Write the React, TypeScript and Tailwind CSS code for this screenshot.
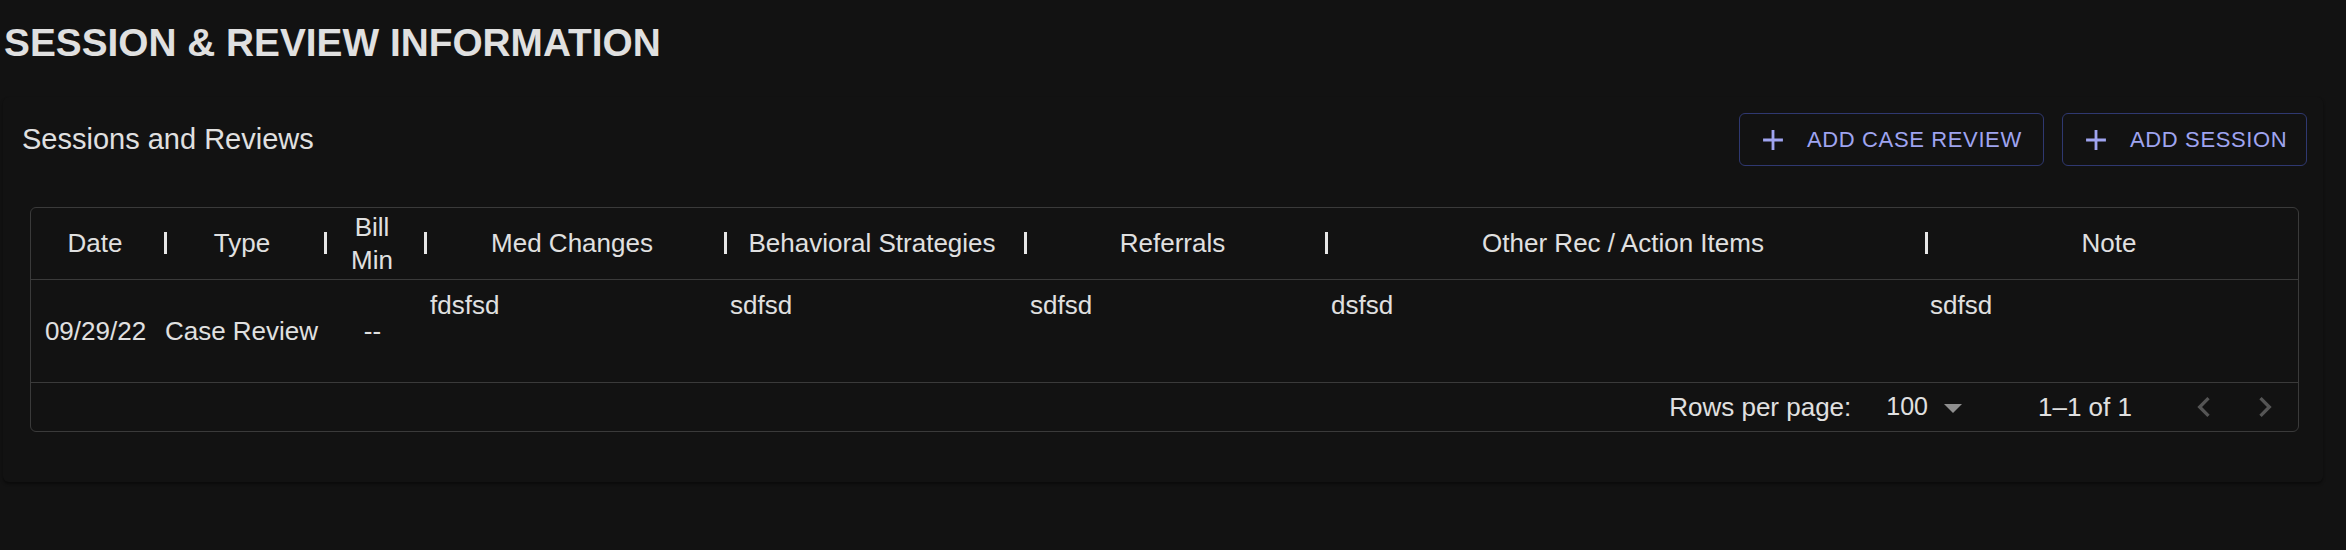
import React from "react";

const gridCols = "grid grid-cols-[134px_160px_100px_300px_300px_301px_600px_1fr]";

const headers = [
  "Date",
  "Type",
  "Bill Min",
  "Med Changes",
  "Behavioral Strategies",
  "Referrals",
  "Other Rec / Action Items",
  "Note",
];

function PlusIcon() {
  return (
    <svg width="34" height="34" viewBox="0 0 24 24" fill="currentColor" className="shrink-0">
      <path d="M19 13h-6v6h-2v-6H5v-2h6V5h2v6h6z" />
    </svg>
  );
}

function OutlineButton({ label, w }: { label: string; w: string }) {
  return (
    <button
      className={`flex items-center h-[53px] ${w} rounded-[6px] border border-[#2f3870] pl-[16px] text-[#9fa4f0] text-[22px] tracking-[0.63px] uppercase`}
    >
      <PlusIcon />
      <span className="ml-[17px] leading-none">{label}</span>
    </button>
  );
}

export default function App() {
  return (
    <div
      className="min-h-[550px] w-full bg-[#121212] text-[#e0e0e0] pl-[3px] pr-[23px]"
      style={{ fontFamily: '"Liberation Sans", Arial, sans-serif' }}
    >
      <h1 className="pt-[20px] pl-[1px] text-[38.8px] leading-[46px] font-bold text-[#e0e0e0] mb-[31px]">
        SESSION &amp; REVIEW INFORMATION
      </h1>

      <div className="bg-[#121212] rounded-[6px] shadow-[0_2px_3px_rgba(0,0,0,0.45)] pt-[16px] pb-[50px]">
        <div className="flex items-center justify-between pl-[19px] pr-[16px]">
          <h2 className="text-[29px] leading-[35px] text-[#e0e0e0]">Sessions and Reviews</h2>
          <div className="flex items-center gap-[18px]">
            <OutlineButton label="Add Case Review" w="w-[305px]" />
            <OutlineButton label="Add Session" w="w-[245px]" />
          </div>
        </div>

        <div className="mt-[41px] ml-[27px] mr-[24px] border border-[#3a3a3a] rounded-[6px] text-[26px]">
          {/* header */}
          <div className={`${gridCols} h-[72px] border-b border-[#3a3a3a]`}>
            {headers.map((h, i) => (
              <div
                key={h}
                className="relative flex items-center justify-center text-center leading-[33px] pl-[10px] pr-[16px]"
              >
                <span>{h}</span>
                {i < headers.length - 1 && (
                  <span className="absolute -right-[2px] top-[24px] w-[3px] h-[22px] bg-[#e6e6e6]" />
                )}
              </div>
            ))}
          </div>

          {/* body row */}
          <div className={`${gridCols} h-[103px] border-b border-[#3a3a3a] leading-[36px]`}>
            <div className="flex items-center justify-center whitespace-nowrap pr-[5px]">09/29/22</div>
            <div className="flex items-center justify-center whitespace-nowrap pr-[7px]">Case Review</div>
            <div className="flex items-center justify-center whitespace-nowrap pr-[5px]">--</div>
            <div className="pl-[5px] pt-[7px]">fdsfsd</div>
            <div className="pl-[5px] pt-[7px]">sdfsd</div>
            <div className="pl-[5px] pt-[7px]">sdfsd</div>
            <div className="pl-[5px] pt-[7px]">dsfsd</div>
            <div className="pl-[4px] pt-[7px]">sdfsd</div>
          </div>

          {/* footer */}
          <div className="flex items-center justify-end h-[48px] pr-[13px]">
            <span>Rows per page:</span>
            <span className="ml-[35px] text-[25px]">100</span>
            <svg width="18" height="9" viewBox="0 0 18 9" className="ml-[16px] mt-[3px]">
              <polygon points="0,0 18,0 9,9" fill="#8f8f8f" />
            </svg>
            <span className="ml-[76px]">1–1 of 1</span>
            <svg width="40" height="40" viewBox="0 0 24 24" fill="#555555" className="ml-[52px]">
              <path d="M15.41 16.59 10.83 12l4.58-4.59L14 6l-6 6 6 6z" />
            </svg>
            <svg width="40" height="40" viewBox="0 0 24 24" fill="#555555" className="ml-[21px]">
              <path d="M8.59 16.59 13.17 12 8.59 7.41 10 6l6 6-6 6z" />
            </svg>
          </div>
        </div>
      </div>
    </div>
  );
}
